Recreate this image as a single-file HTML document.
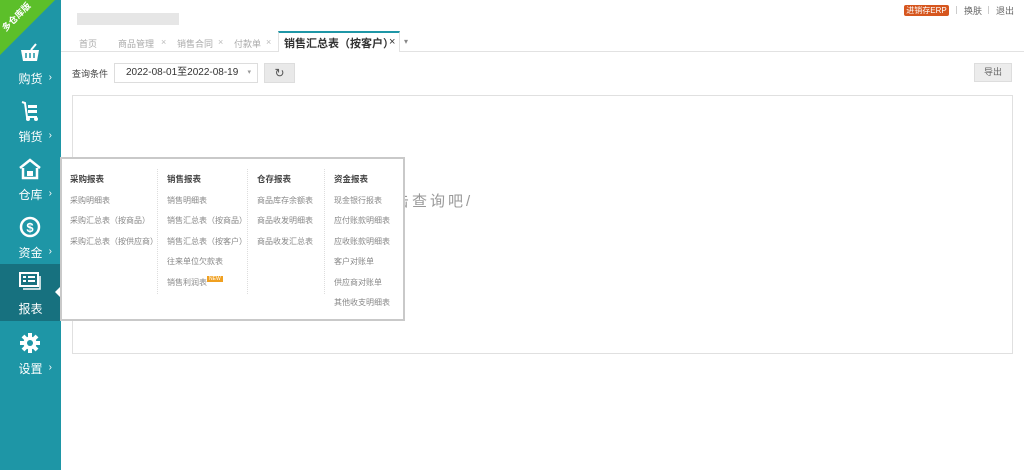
<!DOCTYPE html>
<html><head><meta charset="utf-8"><style>
*{margin:0;padding:0;box-sizing:border-box}
body{width:1024px;height:470px;overflow:hidden;background:#fff;font-family:"Liberation Sans","Noto Sans CJK SC",sans-serif;position:relative;color:#555}
.side{position:absolute;left:0;top:0;width:61px;height:470px;background:#1e96a6}
.item{position:absolute;left:0;width:61px;color:#fff;font-size:12px;text-align:center}
.item .lb{position:absolute;top:32px;left:0;width:61px;text-align:center}
.item .ar{position:absolute;right:9px;top:34px;font-size:10px}
.item svg{position:absolute;left:19px;top:4px}
.abs{position:absolute}
.tab{position:absolute;top:37px;font-size:9px;color:#aaa}
.x{position:absolute;top:37px;font-size:9px;color:#bbb}
.menu{position:absolute;left:60px;top:157px;width:345px;height:164px;background:#fff;border:2px solid #c9c9c9}
.col{position:absolute;top:10px;font-size:8px;color:#888;line-height:20.5px}
.col b{color:#444;font-size:8.5px}
.sep{position:absolute;top:10px;border-left:1px dotted #ddd}
</style></head><body>
<div class="side">
 <div class="abs" style="left:0;top:0;width:0;height:0;border-top:55px solid #5cbf2a;border-right:55px solid transparent"></div>
 <div class="abs" style="left:-2px;top:10px;font-size:9px;color:#fff;transform:rotate(-45deg);font-weight:bold">多仓库版</div>
 <div class="item" style="top:38px;height:56px"><svg width="22" height="22" viewBox="0 0 22 22"><path d="M2 8h18l-2 11H4z" fill="#fff"/><path d="M12 8l5-6" stroke="#fff" stroke-width="2"/><path d="M7 11v5M11 11v5M15 11v5" stroke="#1e96a6" stroke-width="1.5"/></svg><span class="lb">购货</span><span class="ar">›</span></div>
 <div class="item" style="top:96px;height:56px"><svg width="22" height="22" viewBox="0 0 22 22"><path d="M3 2l3 1 2 14h10" stroke="#fff" stroke-width="2" fill="none"/><rect x="9" y="5" width="9" height="3" fill="#fff"/><rect x="9" y="10" width="9" height="3" fill="#fff"/><circle cx="9" cy="19" r="2" fill="#fff"/><circle cx="17" cy="19" r="2" fill="#fff"/></svg><span class="lb">销货</span><span class="ar">›</span></div>
 <div class="item" style="top:154px;height:56px"><svg width="22" height="22" viewBox="0 0 22 22"><path d="M1 10L11 2l10 8" stroke="#fff" stroke-width="2.5" fill="none"/><path d="M4 10v10h14V10" stroke="#fff" stroke-width="2.5" fill="none"/><rect x="8" y="13" width="6" height="5" fill="#fff"/></svg><span class="lb">仓库</span><span class="ar">›</span></div>
 <div class="item" style="top:212px;height:56px"><svg width="22" height="22" viewBox="0 0 22 22"><circle cx="11" cy="11" r="9" stroke="#fff" stroke-width="2.5" fill="none"/><text x="11" y="16" font-size="13" font-weight="bold" fill="#fff" text-anchor="middle" font-family="Liberation Sans">$</text></svg><span class="lb">资金</span><span class="ar">›</span></div>
 <div class="item" style="top:264px;height:57px;background:#17717f"><svg width="22" height="22" viewBox="0 0 22 22" style="top:6px"><rect x="1" y="3" width="18" height="13" stroke="#fff" stroke-width="2" fill="none"/><path d="M4 19h17V6" stroke="#fff" stroke-width="1.5" fill="none"/><rect x="4" y="6" width="3" height="2" fill="#fff"/><rect x="4" y="10" width="3" height="2" fill="#fff"/><rect x="9" y="6" width="7" height="2" fill="#fff"/><rect x="9" y="10" width="7" height="2" fill="#fff"/></svg><span class="lb" style="top:36px">报表</span>
  <div class="abs" style="right:0;top:22px;border-right:6px solid #fff;border-top:6px solid transparent;border-bottom:6px solid transparent"></div></div>
 <div class="item" style="top:328px;height:56px"><svg width="22" height="22" viewBox="0 0 22 22"><path d="M9 1h4l.6 3 2.4 1 2.6-1.7 2.8 2.8L19.7 8.7l1 2.3 3 .6v0" fill="none"/><circle cx="11" cy="11" r="6.5" fill="#fff"/><g stroke="#fff" stroke-width="4"><path d="M11 1v20M1 11h20M4 4l14 14M18 4L4 18"/></g><circle cx="11" cy="11" r="3" fill="#1e96a6"/></svg><span class="lb">设置</span><span class="ar">›</span></div>
</div>
<div class="abs" style="left:77px;top:13px;width:102px;height:12px;background:#e6e6e6"></div>
<div class="abs" style="left:904px;top:5px;width:45px;height:11px;background:#d6561e;border-radius:2px;color:#fff;font-size:8px;text-align:center;line-height:11px">进销存ERP</div>
<div class="abs" style="left:964px;top:4px;font-size:9px;color:#666">换肤</div>
<div class="abs" style="left:996px;top:4px;font-size:9px;color:#666">退出</div>
<div class="abs" style="left:956px;top:6px;height:8px;border-left:1px solid #ccc"></div>
<div class="abs" style="left:988px;top:6px;height:8px;border-left:1px solid #ccc"></div>
<div class="abs" style="left:61px;top:51px;width:963px;border-top:1px solid #e2e2e2"></div>
<span class="tab" style="left:79px">首页</span>
<span class="tab" style="left:118px">商品管理</span><span class="x" style="left:161px">×</span>
<span class="tab" style="left:177px">销售合同</span><span class="x" style="left:218px">×</span>
<span class="tab" style="left:234px">付款单</span><span class="x" style="left:266px">×</span>
<div class="abs" style="left:278px;top:31px;width:122px;height:21px;background:#fff;border:1px solid #e2e2e2;border-top:2px solid #1e96a6;border-bottom:none"></div>
<span class="abs" style="left:284px;top:35px;font-size:11px;color:#333;font-weight:bold">销售汇总表（按客户）</span>
<span class="abs" style="left:389px;top:36px;font-size:11px;color:#333">×</span>
<span class="abs" style="left:404px;top:37px;font-size:8px;color:#888">▾</span>
<span class="abs" style="left:72px;top:67px;font-size:9px;color:#444">查询条件</span>
<div class="abs" style="left:114px;top:63px;width:144px;height:20px;border:1px solid #ddd;font-size:10px;color:#333;line-height:18px;padding-left:11px">2022-08-01至2022-08-19<span style="position:absolute;right:6px;font-size:7px;color:#999">▾</span></div>
<div class="abs" style="left:264px;top:63px;width:31px;height:20px;background:#e9e9e9;border:1px solid #ddd;text-align:center;font-size:12px;line-height:18px;color:#555">↻</div>
<div class="abs" style="left:974px;top:63px;width:38px;height:19px;background:#ececec;border:1px solid #ddd;text-align:center;font-size:9px;line-height:17px;color:#666">导出</div>
<div class="abs" style="left:72px;top:95px;width:941px;height:259px;border:1px solid #e0e0e0"></div>
<div class="abs" style="left:358px;top:190px;font-size:15px;color:#999;letter-spacing:3px">请点击查询吧/</div>
<div class="menu">
 <div class="col" style="left:8px"><b>采购报表</b><br>采购明细表<br>采购汇总表（按商品）<br>采购汇总表（按供应商）</div>
 <div class="sep" style="left:95px;height:125px"></div>
 <div class="col" style="left:105px"><b>销售报表</b><br>销售明细表<br>销售汇总表（按商品）<br>销售汇总表（按客户）<br>往来单位欠款表<br>销售利润表<span style="background:#f0a020;color:#fff;font-size:5px;padding:0 2px;position:relative;top:-5px">NEW</span></div>
 <div class="sep" style="left:185px;height:125px"></div>
 <div class="col" style="left:195px"><b>仓存报表</b><br>商品库存余额表<br>商品收发明细表<br>商品收发汇总表</div>
 <div class="sep" style="left:262px;height:125px"></div>
 <div class="col" style="left:272px"><b>资金报表</b><br>现金银行报表<br>应付账款明细表<br>应收账款明细表<br>客户对账单<br>供应商对账单<br>其他收支明细表</div>
</div>
</body></html>
